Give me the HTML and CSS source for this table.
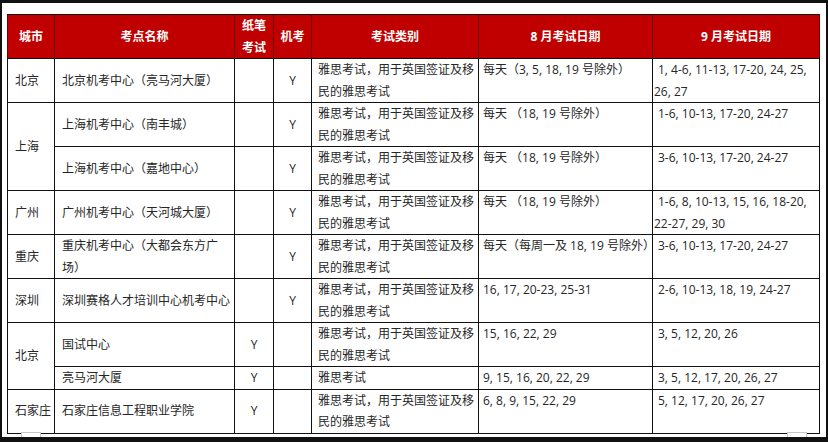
FILE: index.html
```html
<!DOCTYPE html>
<html lang="zh-CN">
<head>
<meta charset="utf-8">
<title>考点列表</title>
<link rel="stylesheet" href="styles.css">
</head>
<body>
<div class="frame">
  <table class="exam-table">
    <colgroup>
      <col class="c-city"><col class="c-name"><col class="c-paper"><col class="c-cbt"><col class="c-type"><col class="c-aug"><col class="c-sep">
    </colgroup>
    <thead>
      <tr>
        <th>城市</th>
        <th>考点名称</th>
        <th>纸笔<br>考试</th>
        <th>机考</th>
        <th>考试类别</th>
        <th>8 月考试日期</th>
        <th>9 月考试日期</th>
      </tr>
    </thead>
    <tbody>
      <tr>
        <td class="city">北京</td>
        <td class="name">北京机考中心（亮马河大厦）</td>
        <td class="mark"></td>
        <td class="mark">Y</td>
        <td class="type">雅思考试，用于英国签证及移民的雅思考试</td>
        <td class="aug">每天（3, 5, 18, 19 号除外）</td>
        <td class="sep">1, 4-6, 11-13, 17-20, 24, 25, 26, 27</td>
      </tr>
      <tr>
        <td class="city" rowspan="2">上海</td>
        <td class="name">上海机考中心（南丰城）</td>
        <td class="mark"></td>
        <td class="mark">Y</td>
        <td class="type">雅思考试，用于英国签证及移民的雅思考试</td>
        <td class="aug">每天 （18, 19 号除外）</td>
        <td class="sep">1-6, 10-13, 17-20, 24-27</td>
      </tr>
      <tr>
        <td class="name">上海机考中心（嘉地中心）</td>
        <td class="mark"></td>
        <td class="mark">Y</td>
        <td class="type">雅思考试，用于英国签证及移民的雅思考试</td>
        <td class="aug">每天 （18, 19 号除外）</td>
        <td class="sep">3-6, 10-13, 17-20, 24-27</td>
      </tr>
      <tr>
        <td class="city">广州</td>
        <td class="name">广州机考中心（天河城大厦）</td>
        <td class="mark"></td>
        <td class="mark">Y</td>
        <td class="type">雅思考试，用于英国签证及移民的雅思考试</td>
        <td class="aug">每天 （18, 19 号除外）</td>
        <td class="sep">1-6, 8, 10-13, 15, 16, 18-20, 22-27, 29, 30</td>
      </tr>
      <tr>
        <td class="city">重庆</td>
        <td class="name">重庆机考中心（大都会东方广场）</td>
        <td class="mark"></td>
        <td class="mark">Y</td>
        <td class="type">雅思考试，用于英国签证及移民的雅思考试</td>
        <td class="aug">每天（每周一及 18, 19 号除外）</td>
        <td class="sep">3-6, 10-13, 17-20, 24-27</td>
      </tr>
      <tr>
        <td class="city">深圳</td>
        <td class="name">深圳赛格人才培训中心机考中心</td>
        <td class="mark"></td>
        <td class="mark">Y</td>
        <td class="type">雅思考试，用于英国签证及移民的雅思考试</td>
        <td class="aug">16, 17, 20-23, 25-31</td>
        <td class="sep">2-6, 10-13, 18, 19, 24-27</td>
      </tr>
      <tr>
        <td class="city" rowspan="2">北京</td>
        <td class="name">国试中心</td>
        <td class="mark">Y</td>
        <td class="mark"></td>
        <td class="type">雅思考试，用于英国签证及移民的雅思考试</td>
        <td class="aug">15, 16, 22, 29</td>
        <td class="sep">3, 5, 12, 20, 26</td>
      </tr>
      <tr>
        <td class="name">亮马河大厦</td>
        <td class="mark">Y</td>
        <td class="mark"></td>
        <td class="type">雅思考试</td>
        <td class="aug">9, 15, 16, 20, 22, 29</td>
        <td class="sep">3, 5, 12, 17, 20, 26, 27</td>
      </tr>
      <tr>
        <td class="city">石家庄</td>
        <td class="name">石家庄信息工程职业学院</td>
        <td class="mark">Y</td>
        <td class="mark"></td>
        <td class="type">雅思考试，用于英国签证及移民的雅思考试</td>
        <td class="aug">6, 8, 9, 15, 22, 29</td>
        <td class="sep">5, 12, 17, 20, 26, 27</td>
      </tr>
    </tbody>
  </table>
  <span class="handle handle-left"></span>
  <span class="handle handle-right"></span>
</div>
</body>
</html>
```

FILE: styles.css
```css
html, body {
  margin: 0;
  padding: 0;
  background: #111;
}

.frame {
  position: relative;
  box-sizing: border-box;
  width: 828px;
  height: 442px;
  background: #fff;
  border-style: solid;
  border-color: #111;
  border-width: 3px 2px 5px 2px;
  padding: 11px 0 0 5px;
  font-family: "Open Sans", "Noto Sans CJK SC", sans-serif;
  font-size: 12px;
  color: #262626;
}

.exam-table {
  border-collapse: collapse;
  table-layout: fixed;
  width: 812px;
  border: 1px solid #111;
}

.c-city { width: 47px; }
.c-name { width: 180px; }
.c-paper { width: 39px; }
.c-cbt { width: 38px; }
.c-type { width: 167px; }
.c-aug { width: 174px; }
.c-sep { width: 167px; }

.exam-table th {
  background: #c00000;
  color: #fff;
  font-weight: 700;
  font-size: 12px;
  line-height: 21.5px;
  height: 43px;
  padding: 0;
  text-align: center;
  vertical-align: middle;
  border-left: 1px solid #6e0000;
  border-right: 1px solid #6e0000;
  border-top: 1px solid #111;
  border-bottom: 1px solid #111;
}

.exam-table td {
  border: 1px solid #111;
  line-height: 21.5px;
  padding: 0;
  vertical-align: top;
}

.exam-table td.city {
  padding-left: 7px;
  vertical-align: middle;
}

.exam-table td.name {
  padding-left: 7px;
  vertical-align: middle;
}

.exam-table td.mark {
  text-align: center;
  vertical-align: middle;
}

.exam-table td.type {
  padding-left: 6px;
}

.exam-table td.aug {
  padding-left: 4px;
}

.exam-table td.sep {
  padding-left: 1px;
  text-indent: 4px;
}

.handle {
  position: absolute;
  bottom: 0;
  width: 18px;
  height: 4px;
  background: #fff;
  border: 1px solid #c4c4c4;
  border-bottom: none;
}

.handle-left { left: 19px; }
.handle-right { right: 19px; }
```
